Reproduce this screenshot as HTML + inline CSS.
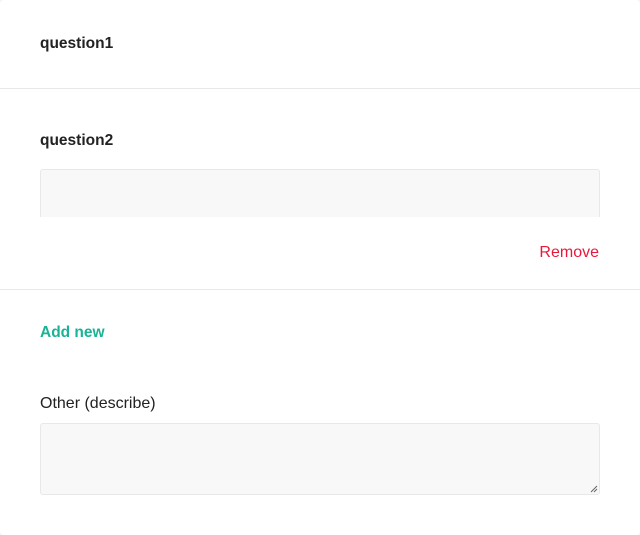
<!DOCTYPE html>
<html><head><style>
body{margin:0;width:640px;height:535px;background:#f4f4f4;font-family:"Liberation Sans",sans-serif;overflow:hidden}
.card{position:absolute;left:0;top:0;width:640px;height:535px;background:#fff;border-radius:4px}
.t{position:absolute;left:40px;font-size:16px;color:#222}
.b{font-weight:bold;font-size:15.5px}
.line{position:absolute;left:0;width:640px;height:1px;background:#e8e8e8}
.box{position:absolute;left:40px;width:558px;background:#f8f8f8;border:1px solid #e8e8e8;border-radius:3px}
</style></head><body><div class="card">
<div class="t b" style="top:35px">question1</div>
<div class="line" style="top:88px"></div>
<div class="t b" style="top:132px">question2</div>
<div class="box" style="top:169px;height:47px;border-bottom:none;border-radius:3px 3px 0 0"></div>
<div class="t" style="top:244px;left:auto;right:41px;color:#e8193c">Remove</div>
<div class="line" style="top:289px"></div>
<div class="t b" style="top:324px;color:#1ab394">Add new</div>
<div class="t" style="top:395px">Other (describe)</div>
<div class="box" style="top:423px;height:70px"></div>
<svg style="position:absolute;left:590px;top:485px" width="8" height="8"><path d="M7 1L1 7M7 4L4 7" stroke="#666" stroke-width="1"/></svg>
</div></body></html>
